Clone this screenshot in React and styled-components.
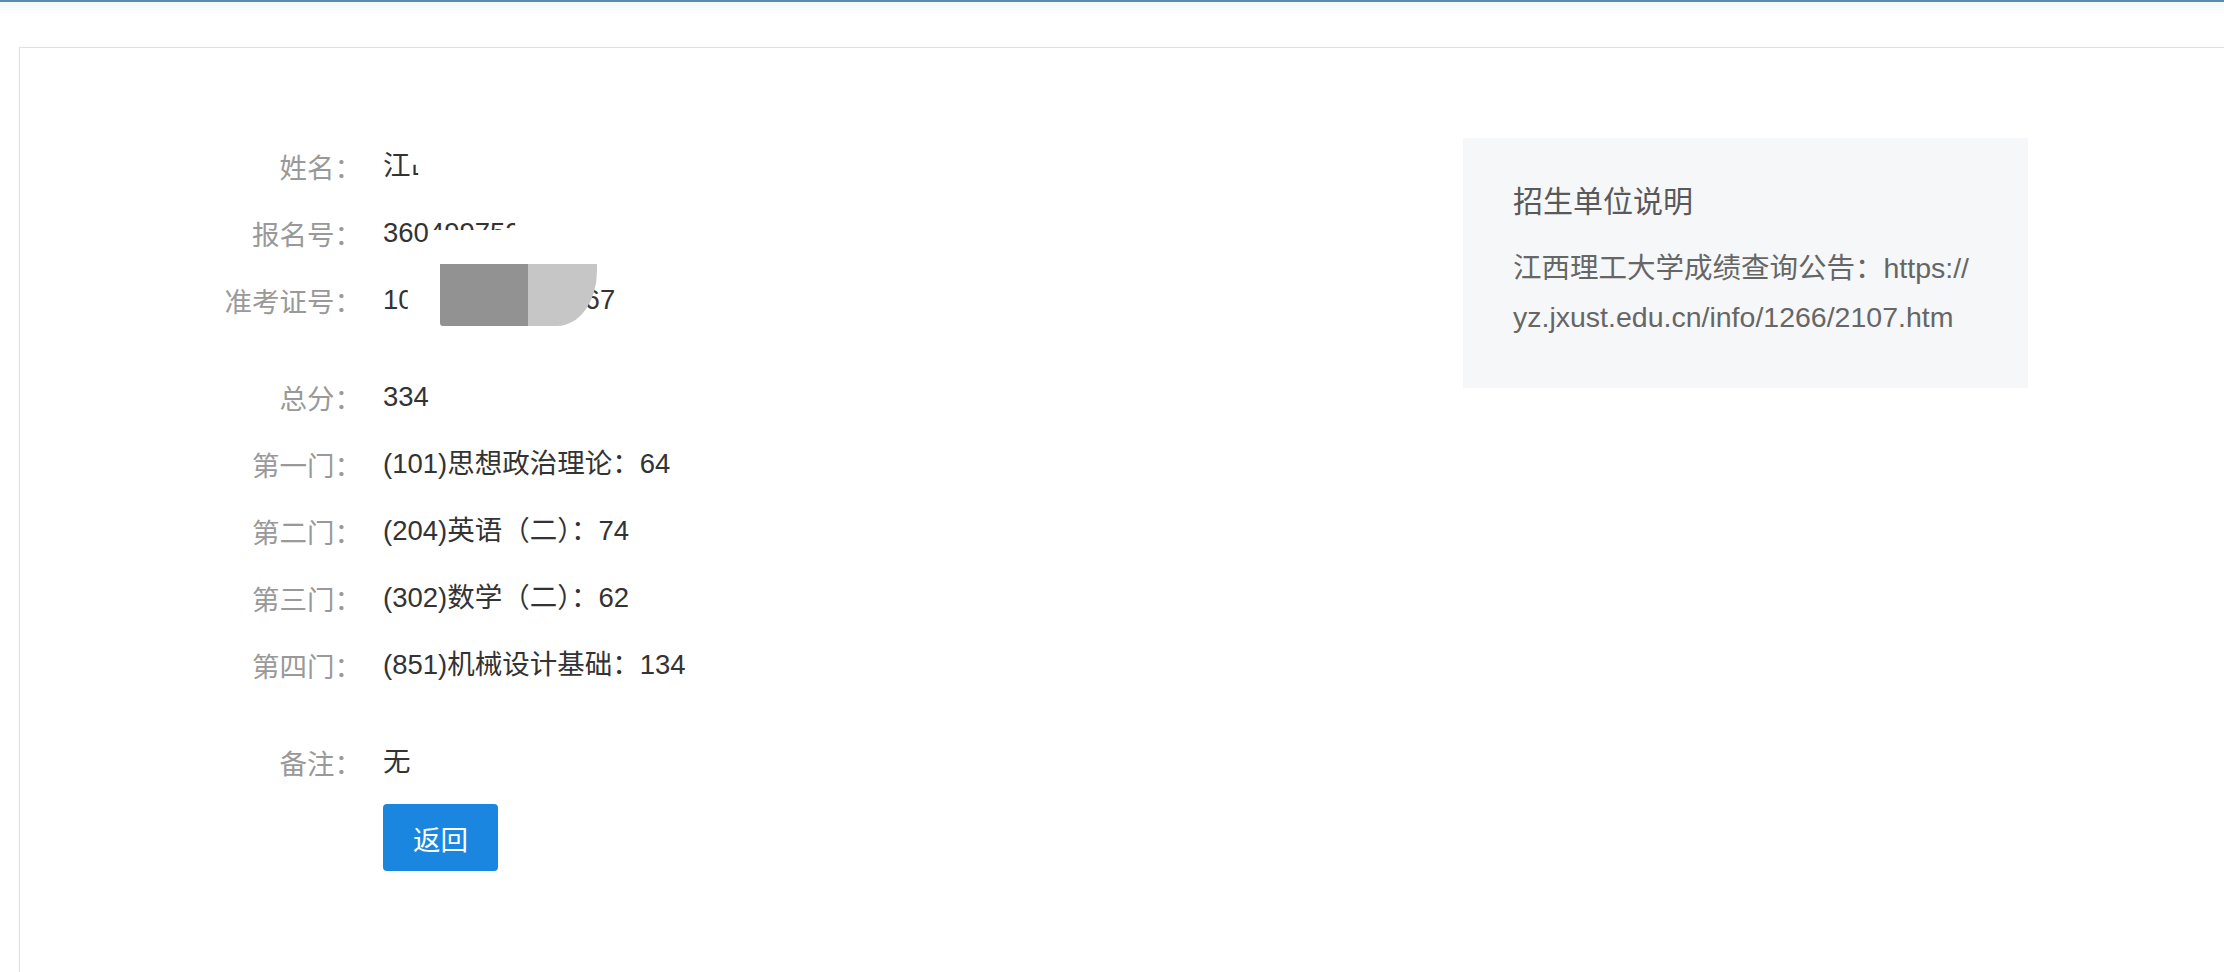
import React from 'react';
import styled, { createGlobalStyle } from 'styled-components';

const GlobalStyle = createGlobalStyle`
	html, body {
		margin: 0;
		padding: 0;
		background: #ffffff;
		overflow: hidden;
	}
	body {
		font-family: 'Liberation Sans', 'Noto Sans CJK SC', sans-serif;
		color: #333333;
	}
`;

const Page = styled.div`
	width: 100%;
	min-height: 972px;
`;

const TopBar = styled.div`
	height: 2px;
	background: #5b8cae;
`;

const TopGlow = styled.div`
	height: 14px;
	background: linear-gradient(#f2f9fb, #ffffff);
`;

const Card = styled.div`
	margin: 31px -40px 0 19px;
	min-height: 1000px;
	border: 1px solid #e2e2e2;
	box-shadow: 0 0 2px rgba(0, 0, 0, 0.06);
	padding: 84px 0 0 182px;
	display: flex;
	align-items: flex-start;
`;

const InfoColumn = styled.div`
	flex: 0 0 1261px;
`;

const Section = styled.div`
	margin-top: ${(p) => (p.first ? 0 : 30)}px;
`;

const Row = styled.div`
	display: flex;
	align-items: center;
	height: 67px;
	font-size: 27.5px;
`;

const Label = styled.div`
	flex: 0 0 160px;
	text-align: right;
	color: #999999;
`;

const Value = styled.div`
	position: relative;
	margin-left: 21px;
	line-height: 40px;
	color: #333333;
	white-space: nowrap;
`;

const Clipped = styled.span`
	display: inline-block;
	line-height: 1;
	clip-path: ${(p) => p.inset};
`;

const Tail = styled.span`
	margin-left: ${(p) => p.offset}px;
`;

const Redaction = styled.div`
	position: absolute;
	left: 57px;
	top: -16px;
	display: flex;
	height: 62px;
`;

const RedactDark = styled.div`
	width: 88px;
	background: #929292;
	border-bottom-left-radius: 3px;
`;

const RedactLight = styled.div`
	width: 69px;
	background: #c6c6c6;
	border-bottom-right-radius: 40px 55px;
`;

const BackButton = styled.button`
	margin: 9px 0 0 181px;
	height: 67px;
	padding: 0 30px;
	border: none;
	border-radius: 4px;
	background: #1b86e0;
	color: #ffffff;
	font-family: 'Liberation Sans', 'Noto Sans CJK SC', sans-serif;
	font-size: 27.5px;
	cursor: pointer;
`;

const NoticePanel = styled.div`
	flex: 0 0 565px;
	box-sizing: border-box;
	margin-top: 6px;
	padding: 44px 40px 46px 50px;
	background: #f6f7f9;
`;

const NoticeTitle = styled.div`
	font-size: 30px;
	line-height: 40px;
	color: #595959;
`;

const NoticeBody = styled.div`
	margin-top: 22px;
	font-size: 28.5px;
	line-height: 49px;
	color: #666666;
`;

const scores = [
	{ label: '总分：', value: '334' },
	{ label: '第一门：', value: '(101)思想政治理论：64' },
	{ label: '第二门：', value: '(204)英语（二）：74' },
	{ label: '第三门：', value: '(302)数学（二）：62' },
	{ label: '第四门：', value: '(851)机械设计基础：134' },
];

const App = () => {
	return (
		<Page>
			<GlobalStyle />
			<TopBar />
			<TopGlow />
			<Card>
				<InfoColumn>
					<Section first>
						<Row>
							<Label>姓名：</Label>
							<Value>
								江<Clipped inset='inset(48% 72% 0 0)'>山</Clipped>
							</Value>
						</Row>
						<Row>
							<Label>报名号：</Label>
							<Value>
								360<Clipped inset='inset(0 6% 58% 0)'>499752</Clipped>
							</Value>
						</Row>
						<Row>
							<Label>准考证号：</Label>
							<Value>
								1<Clipped inset='inset(0 38% 0 0)'>0</Clipped>
								<Tail offset={171}>67</Tail>
								<Redaction>
									<RedactDark />
									<RedactLight />
								</Redaction>
							</Value>
						</Row>
					</Section>
					<Section>
						{scores.map((s) => (
							<Row key={s.label}>
								<Label>{s.label}</Label>
								<Value>{s.value}</Value>
							</Row>
						))}
					</Section>
					<Section>
						<Row>
							<Label>备注：</Label>
							<Value>无</Value>
						</Row>
						<BackButton>返回</BackButton>
					</Section>
				</InfoColumn>
				<NoticePanel>
					<NoticeTitle>招生单位说明</NoticeTitle>
					<NoticeBody>
						江西理工大学成绩查询公告：https://<wbr />yz.jxust.edu.cn/info/1266/2107.htm
					</NoticeBody>
				</NoticePanel>
			</Card>
		</Page>
	);
};

export default App;
